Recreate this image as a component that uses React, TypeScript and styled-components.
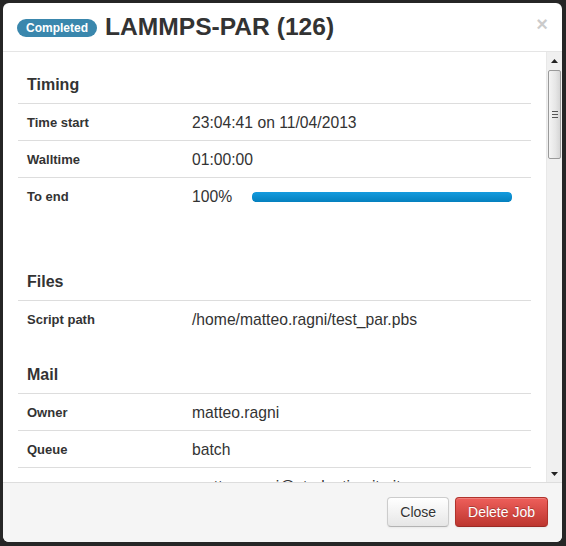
import React from "react";
import styled, { createGlobalStyle } from "styled-components";

const Global = createGlobalStyle`
  html, body { margin: 0; padding: 0; }
  body {
    background: #262626;
    font-family: "Liberation Sans", Arial, sans-serif;
    color: #333;
    width: 566px;
    height: 546px;
    overflow: hidden;
  }
`;

const Page = styled.div`
  padding: 3px 0 0 3px;
`;

const Modal = styled.div`
  width: 559px;
  height: 539px;
  background: #fff;
  border-radius: 6px;
  overflow: hidden;
  display: flex;
  flex-direction: column;
`;

const Header = styled.div`
  box-sizing: border-box;
  border-bottom: 1px solid #e5e5e5;
  padding: 0 15px 0 14px;
  display: flex;
  align-items: center;
  gap: 8px;
  flex: none;
  height: 49px;
`;

const Badge = styled.span`
  display: inline-block;
  background: #3a87ad;
  color: #fff;
  font-size: 12px;
  font-weight: bold;
  line-height: 14px;
  padding: 2px 9px;
  border-radius: 9px;
  margin-top: 2px;
`;

const Title = styled.h3`
  margin: 0;
  font-size: 24.6px;
  font-weight: bold;
  line-height: 30px;
  color: #333;
  flex: 1;
`;

const CloseX = styled.span`
  font-size: 20px;
  font-weight: bold;
  line-height: 20px;
  color: #000;
  opacity: 0.2;
  margin-right: -1px;
  margin-top: -6px;
`;

const Body = styled.div`
  height: 430px;
  display: flex;
  flex: none;
`;

const Content = styled.div`
  flex: 1;
  overflow: hidden;
  padding: 15px 15px 0 15px;
`;

const Section = styled.div`
  margin-bottom: 20px;
`;

const Heading = styled.div`
  padding: 8px 9px;
  font-size: 16px;
  font-weight: bold;
  line-height: 20px;
`;

const Row = styled.div<{ $extra?: number }>`
  display: grid;
  grid-template-columns: 166px 1fr;
  border-top: 1px solid #ddd;
  padding-bottom: ${(p) => p.$extra ?? 0}px;
`;

const Label = styled.div`
  padding: 9px 9px 7px;
  font-size: 13px;
  font-weight: bold;
  line-height: 20px;
  color: #333;
`;

const Value = styled.div`
  padding: 9px 8px 7px;
  font-size: 15.7px;
  line-height: 20px;
  color: #333;
  display: flex;
  align-items: center;
  gap: 20px;
`;

const Progress = styled.div`
  width: 260px;
  height: 10px;
  border-radius: 4px;
  background: #f7f7f7;
  overflow: hidden;
`;

const Bar = styled.div`
  height: 100%;
  background: linear-gradient(to bottom, #149bdf, #0480be);
  border-radius: 4px;
`;

const ScrollTrack = styled.div`
  width: 16px;
  background: #f0f0f0;
  border-left: 1px solid #e8e8e8;
  box-sizing: border-box;
  display: flex;
  flex-direction: column;
  align-items: center;
`;

const Arrow = styled.div`
  height: 17px;
  width: 100%;
  display: flex;
  align-items: center;
  justify-content: center;
`;

const Thumb = styled.div`
  width: 13px;
  height: 89px;
  margin-top: 1px;
  box-sizing: border-box;
  border: 1px solid #9a9a9a;
  border-radius: 2px;
  background: linear-gradient(to right, #f4f4f4, #e6e6e6 60%, #d6d6d6);
  display: flex;
  align-items: center;
  justify-content: center;
`;

const Grip = styled.div`
  width: 6px;
  height: 7px;
  background: repeating-linear-gradient(
    to bottom,
    #555 0px,
    #555 1px,
    transparent 1px,
    transparent 3px
  );
`;

const Spacer = styled.div`
  flex: 1;
`;

const Footer = styled.div`
  flex: 1;
  background: #f5f5f5;
  border-top: 1px solid #ddd;
  padding: 14px 14px 15px 15px;
  display: flex;
  justify-content: flex-end;
  align-items: flex-start;
  gap: 6px;
`;

const Button = styled.button<{ $danger?: boolean }>`
  font-family: "Liberation Sans", Arial, sans-serif;
  font-size: 14px;
  line-height: 20px;
  height: 30px;
  padding: 4px 12px;
  border-radius: 4px;
  cursor: pointer;
  border: 1px solid ${(p) => (p.$danger ? "#b0332c" : "#ccc")};
  border-bottom-color: ${(p) => (p.$danger ? "#9a2a24" : "#b3b3b3")};
  color: ${(p) => (p.$danger ? "#fff" : "#333")};
  background: ${(p) =>
    p.$danger
      ? "linear-gradient(to bottom, #ee5f5b, #bd362f)"
      : "linear-gradient(to bottom, #ffffff, #e6e6e6)"};
  box-shadow: inset 0 1px 0 rgba(255, 255, 255, 0.2), 0 1px 2px rgba(0, 0, 0, 0.05);
  text-shadow: ${(p) =>
    p.$danger ? "0 -1px 0 rgba(0,0,0,0.25)" : "0 1px 1px rgba(255,255,255,0.75)"};
`;

type RowData = { label: string; value: React.ReactNode; extra?: number };

const sections: { title: string; rows: RowData[] }[] = [
  {
    title: "Timing",
    rows: [
      { label: "Time start", value: "23:04:41 on 11/04/2013" },
      { label: "Walltime", value: "01:00:00" },
      {
        label: "To end",
        value: (
          <>
            <span>100%</span>
            <Progress>
              <Bar style={{ width: "100%" }} />
            </Progress>
          </>
        ),
        extra: 30,
      },
    ],
  },
  {
    title: "Files",
    rows: [{ label: "Script path", value: "/home/matteo.ragni/test_par.pbs" }],
  },
  {
    title: "Mail",
    rows: [
      { label: "Owner", value: "matteo.ragni" },
      { label: "Queue", value: "batch" },
      { label: "Mail", value: "matteo.ragni@studenti.unitn.it" },
    ],
  },
];

export default function App() {
  return (
    <>
      <Global />
      <Page>
        <Modal>
          <Header>
            <Badge>Completed</Badge>
            <Title>LAMMPS-PAR (126)</Title>
            <CloseX>×</CloseX>
          </Header>
          <Body>
            <Content>
              {sections.map((s) => (
                <Section key={s.title}>
                  <Heading>{s.title}</Heading>
                  {s.rows.map((r) => (
                    <Row key={r.label} $extra={r.extra}>
                      <Label>{r.label}</Label>
                      <Value>{r.value}</Value>
                    </Row>
                  ))}
                </Section>
              ))}
            </Content>
            <ScrollTrack>
              <Arrow>
                <svg width="7" height="4" viewBox="0 0 7 4">
                  <polygon points="3.5,0 7,4 0,4" fill="#222" />
                </svg>
              </Arrow>
              <Thumb>
                <Grip />
              </Thumb>
              <Spacer />
              <Arrow>
                <svg width="7" height="4" viewBox="0 0 7 4">
                  <polygon points="0,0 7,0 3.5,4" fill="#222" />
                </svg>
              </Arrow>
            </ScrollTrack>
          </Body>
          <Footer>
            <Button>Close</Button>
            <Button $danger>Delete Job</Button>
          </Footer>
        </Modal>
      </Page>
    </>
  );
}
